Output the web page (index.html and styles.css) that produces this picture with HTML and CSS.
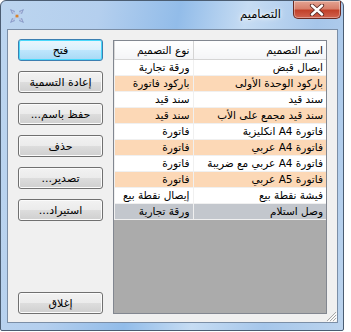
FILE: index.html
```html
<!DOCTYPE html>
<html lang="ar">
<head>
  <meta charset="UTF-8" />
  <meta name="viewport" content="width=device-width, initial-scale=1.0"/>
  <title>التصاميم</title>
  <link rel="stylesheet" href="styles.css">
</head>
<body>

<div class="window">
  <div class="titlebar">
    <svg class="app-icon" width="16" height="16" viewBox="0 0 16 16">
      <path d="M1 1 L6 3 L5 5 L3 6 Z" fill="#8a9cc8"/>
      <path d="M15 1 L13 6 L11 5 L10 3 Z" fill="#8a9cc8"/>
      <path d="M1 15 L3 10 L5 11 L6 13 Z" fill="#8a9cc8"/>
      <path d="M15 15 L10 13 L11 11 L13 10 Z" fill="#8a9cc8"/>
      <path d="M3 3 L7 7 M13 3 L9 7 M3 13 L7 9 M13 13 L9 9" stroke="#b7c3e2" stroke-width="1.2"/>
      <circle cx="8" cy="8" r="1.6" fill="#d9822b"/>
    </svg>
    <span class="title">التصاميم</span>
    <div class="close-btn">
      <svg width="18" height="12" viewBox="0 0 18 12">
        <path d="M4 1.5 L14 10.5 M14 1.5 L4 10.5" stroke="#5b2a24" stroke-width="4.2" stroke-linecap="round"/>
        <path d="M4 1.5 L14 10.5 M14 1.5 L4 10.5" stroke="#fff" stroke-width="2.4" stroke-linecap="round"/>
      </svg>
    </div>
  </div>

  <div class="client" dir="rtl">
    <div class="grid-box">
      <table class="designs">
        <thead>
          <tr>
            <th class="col-name">اسم التصميم</th>
            <th class="col-type">نوع التصميم</th>
          </tr>
        </thead>
        <tbody>
          <tr><td>ايصال قبض</td><td>ورقة تجارية</td></tr>
          <tr class="alt"><td>باركود الوحدة الأولى</td><td>باركود فاتورة</td></tr>
          <tr><td>سند قيد</td><td>سند قيد</td></tr>
          <tr class="alt"><td>سند قيد مجمع على الأب</td><td>سند قيد</td></tr>
          <tr><td>فاتورة A4 انكليزية</td><td>فاتورة</td></tr>
          <tr class="alt"><td>فاتورة A4 عربي</td><td>فاتورة</td></tr>
          <tr><td>فاتورة A4 عربي مع ضريبة</td><td>فاتورة</td></tr>
          <tr class="alt"><td>فاتورة A5 عربي</td><td>فاتورة</td></tr>
          <tr><td>فيشة نقطة بيع</td><td>إيصال نقطة بيع</td></tr>
          <tr class="selected"><td>وصل استلام</td><td>ورقة تجارية</td></tr>
        </tbody>
      </table>
    </div>

    <div class="buttons">
      <button class="btn default">فتح</button>
      <button class="btn">إعادة التسمية</button>
      <button class="btn">حفظ باسم...</button>
      <button class="btn">حذف</button>
      <button class="btn">تصدير...</button>
      <button class="btn">استيراد...</button>
      <button class="btn close">إغلاق</button>
    </div>

    <svg class="grip" width="12" height="12" viewBox="0 0 12 12">
      <path d="M11 2 L2 11 M11 5 L5 11 M11 8 L8 11" stroke="#a8a8a8" stroke-width="1"/>
      <path d="M12 3 L3 12 M12 6 L6 12 M12 9 L9 12" stroke="#fff" stroke-width="1"/>
    </svg>
  </div>
</div>

</body>
</html>
```

FILE: styles.css
```css
body {
  margin: 0;
  background: #fff;
  font-family: "DejaVu Sans", Tahoma, sans-serif;
  font-size: 11px;
  color: #000;
}

.window {
  width: 344px;
  height: 331px;
  box-sizing: border-box;
  border: 1px solid #4b5d72;
  border-radius: 6px 6px 2px 2px;
  background: linear-gradient(100deg, #bcd5ef 0%, #b4cfee 25%, #92bce9 45%, #c6dcf3 62%, #a6c6ea 80%, #bcd4ee 100%);
  padding: 0 5px 7px 6px;
}

.titlebar {
  height: 28px;
  display: flex;
  align-items: flex-start;
}

.app-icon {
  margin: 7px 0 0 2px;
}

.title {
  margin: 6px 12px 0 auto;
  font-size: 11.5px;
  color: #000;
  text-shadow: 0 0 6px #fff, 0 0 3px #fff;
}

.close-btn {
  width: 48px;
  height: 18px;
  margin-right: -3px;
  box-sizing: border-box;
  border: 1px solid #6a2a22;
  border-top: none;
  border-radius: 0 0 5px 5px;
  background: linear-gradient(#e3a392 0%, #d7806b 45%, #c2412a 55%, #d06350 100%);
  box-shadow: inset 0 0 0 1px rgba(255,255,255,0.35);
  display: flex;
  justify-content: center;
  align-items: center;
}

.client {
  position: relative;
  height: 294px;
  box-sizing: border-box;
  border: 1px solid #7b8ea6;
  background: #f0f0f0;
  padding: 9px 10px 8px;
  display: flex;
  gap: 10px;
}

.grid-box {
  width: 214px;
  margin-top: 1px;
  box-sizing: border-box;
  border: 1px solid #828790;
  background: #ababab;
}

.designs {
  width: 100%;
  border-collapse: collapse;
  table-layout: fixed;
  font-size: 10.5px;
}

.designs th {
  height: 18px;
  padding: 0 3px;
  font-weight: normal;
  text-align: right;
  background: linear-gradient(#ffffff, #f4f5f7);
  border-bottom: 1px solid #d5d5d5;
  border-left: 1px solid #d5d5d5;
  box-sizing: border-box;
}

.designs th.col-name { width: 133px; }

.designs td {
  height: 16px;
  padding: 0 3px;
  text-align: right;
  white-space: nowrap;
  overflow: hidden;
  background: #fff;
  border-bottom: 1px solid #f0f0f0;
  border-left: 1px solid #f0f0f0;
  box-sizing: border-box;
}

.designs tr.alt td { background: #fcd8b6; }
.designs tr.selected td { background: #c3c7cd; }

.buttons {
  width: 85px;
  display: flex;
  flex-direction: column;
  gap: 10px;
}

.btn {
  height: 22px;
  padding: 0;
  font-family: inherit;
  font-size: 11px;
  color: #000;
  border: 1px solid #707070;
  border-radius: 3px;
  background: linear-gradient(#f2f2f2 0%, #ebebeb 50%, #dddddd 51%, #cfcfcf 100%);
  box-shadow: inset 0 0 0 1px #fbfbfb;
}

.btn.default {
  border-color: #3c7fb1;
  background: linear-gradient(#eaf6fd 0%, #d9f0fc 50%, #bee6fd 51%, #a7d9f5 100%);
  box-shadow: inset 0 0 0 1px #48d8fb;
}

.btn.close {
  margin-top: auto;
}

.grip {
  position: absolute;
  right: 0;
  bottom: 0;
}
```
